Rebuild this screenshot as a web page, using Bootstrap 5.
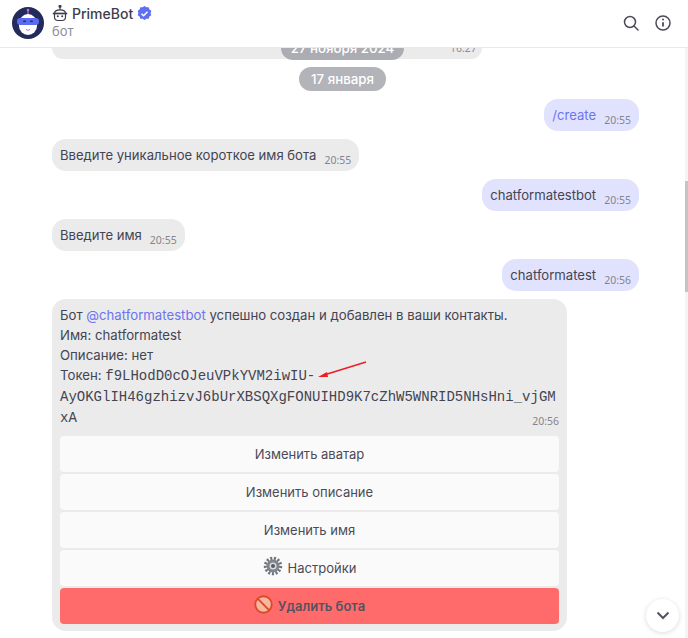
<!DOCTYPE html>
<html lang="ru">
<head>
<meta charset="utf-8">
<title>PrimeBot</title>
<link href="https://cdn.jsdelivr.net/npm/bootstrap@5.3.0/dist/css/bootstrap.min.css" rel="stylesheet">
<style>
html,body{height:100%;overflow:hidden}
body{font-family:Inter,"Noto Sans",sans-serif;font-size:13px;line-height:20px;color:#4b4b58;background:#fff}
.chat-shell{width:688px;height:638px;overflow:hidden;display:flex;flex-direction:column;position:relative}
.chat-head{height:48px;flex:none;border-bottom:1px solid #e8e8ea;padding:0 12px 2px;background:#fff}
.head-name{font-size:14px;line-height:18px;font-weight:500;color:#3d3d4c;margin-top:-1px}
.head-sub{font-size:13px;line-height:18px;color:#8d8d99;margin-top:-1px}
.head-actions{gap:15px;margin-right:4px}
.chat-body{flex:1;min-height:0;position:relative;overflow:hidden;padding:0 49px 0 52px}
.rail{position:absolute;right:0;top:0;bottom:0;width:3px;background:#f4f4f5}
.thumb{position:absolute;right:0;top:133px;height:111px;width:3px;background:#c4c4c4}
.clip-row{height:11px;margin-bottom:8px;position:relative}
.clip-bubble{width:430px;height:11px;background:#ebebeb;border-radius:0 0 14px 14px}
.date-chip{background:#b3b3ba;color:#fff;font-size:13.3px;line-height:24px;height:24px;border-radius:12px;padding:0 12px;font-weight:500}
.date-over{position:absolute;left:229px;top:-12px;width:123px;background:#acacb3;text-align:center;white-space:nowrap;padding:0}
.clip-time{position:absolute;left:398px;top:-7px;font-family:"Noto Sans",sans-serif;font-size:10.5px;line-height:14px;color:#8d8d99}
.date-row{margin-right:6px}
.msg{border-radius:14px;padding:6px 8px;font-size:13.1px;line-height:20px;display:flex;align-items:flex-end}
.msg-in{background:#ebebeb;color:#444452}
.msg-out{background:#e1e3fe;color:#444452}
.tm{font-family:"Noto Sans",sans-serif;font-size:10.5px;line-height:14px;color:#85858f;margin-left:8px;position:relative;top:2px}
.cmd,.lnk{color:#6b75f0}
.big{width:515px;background:#ebebeb;border-radius:14px;padding:6px 8px 0;margin-top:8px}
.big-text{color:#444452;line-height:20px;font-size:13.2px}
.mono{font-family:"Liberation Mono",monospace;font-size:14px;line-height:20px;overflow-wrap:anywhere}
.big-tm{float:right;font-family:"Noto Sans",sans-serif;font-size:10.5px;line-height:14px;color:#85858f;margin-top:-14px;height:14px}
.big-end{height:8px;clear:both}
.kb{display:flex;flex-direction:column;gap:2px;padding-bottom:7px;margin:0}
.kb-btn{height:36px;background:#fafafa;color:#4b4b58;border:0;border-radius:4px;font-size:13px;padding:0;width:100%;line-height:36px}
.kb-btn:hover{background:#fafafa;color:#4b4b58}
.kb-danger{background:#ff6b6b;color:#55525f;font-weight:600}
.kb-danger:hover{background:#ff6b6b;color:#55525f}
.down{position:absolute;right:9px;bottom:6px;width:33px;height:33px;border-radius:50%;background:#fff;box-shadow:0 1px 5px rgba(0,0,0,.15)}
.gap-row{margin-bottom:8px}
.arrow{position:absolute;left:266px;top:62px}
.big-wrap{position:relative}
.icon-gap{margin-right:5px}
</style>
</head>
<body>
<div class="chat-shell">
  <header class="chat-head d-flex align-items-center">
    <svg width="32" height="32" viewBox="0 0 32 32" class="me-2 flex-shrink-0">
      <circle cx="16" cy="16" r="16" fill="#232a5c"/>
      <rect x="15.4" y="2" width="1.2" height="6" fill="#c86fd0"/>
      <circle cx="16" cy="3" r="1.3" fill="#c86fd0"/>
      <path d="M7 17a9 10 0 0 1 18 0v2a9 9 0 0 1-18 0z" fill="#fff"/>
      <rect x="5" y="11" width="22" height="7" rx="3.2" fill="#5c6cf0"/>
      <rect x="11" y="13.5" width="3" height="1.6" rx=".8" fill="#232a5c"/>
      <rect x="18" y="13.5" width="3" height="1.6" rx=".8" fill="#232a5c"/>
      <path d="M14 22.5q2 1.6 4 0" stroke="#c86fd0" fill="none" stroke-width="1"/>
    </svg>
    <div class="flex-grow-1">
      <div class="head-name d-flex align-items-center">
        <svg width="16" height="17" viewBox="0 0 16 17" class="me-1" fill="none" stroke="#3d3d4c" stroke-width="1.2">
          <circle cx="8" cy="1.3" r="1" fill="#3d3d4c"/>
          <path d="M8 2.300v2.500"/>
          <path d="M2.500 8.500C2.500 6 5 4.800 8 4.800s5.500 1.200 5.500 3.700v3.500c0 2.200-1.500 3.500-3.500 3.500H6c-2 0-3.500-1.300-3.500-3.500z"/>
          <path d="M.8 8.500h14.400" stroke-width="1.700"/>
          <circle cx="5.800" cy="11.200" r="1" fill="#3d3d4c" stroke="none"/>
          <circle cx="10.200" cy="11.200" r="1" fill="#3d3d4c" stroke="none"/>
        </svg>
        <span>PrimeBot</span>
        <svg width="15" height="15" viewBox="0 0 15 15" class="ms-1">
          <path d="M7.500 0l1.900 1.300 2.300-.1.700 2.200 1.900 1.300-.7 2.300.7 2.300-1.900 1.300-.7 2.200-2.300-.1-1.900 1.300-1.900-1.300-2.300.1-.7-2.200-1.900-1.300.7-2.300-.7-2.300 1.900-1.300.7-2.200 2.300.1z" fill="#5f6ff2"/>
          <path d="M4.500 7.700l2.100 2 3.900-4" stroke="#fff" stroke-width="1.500" fill="none"/>
        </svg>
      </div>
      <div class="head-sub">бот</div>
    </div>
    <div class="d-flex align-items-center head-actions">
      <svg width="16" height="16" viewBox="0 0 16 16" fill="none" stroke="#4b4b58" stroke-width="1.500"><circle cx="7" cy="7" r="5.500"/><path d="M11 11L15 15" stroke-linecap="round"/></svg>
      <svg width="18" height="18" viewBox="0 0 18 18" fill="none" stroke="#4b4b58" stroke-width="1.500"><circle cx="9" cy="9" r="7"/><path d="M9 8.200v4.300" stroke-width="1.800"/><circle cx="9" cy="5.600" r="1" fill="#4b4b58" stroke="none"/></svg>
    </div>
  </header>
  <main class="chat-body">
    <div class="clip-row">
      <div class="clip-bubble"></div>
      <div class="date-chip date-over">27 ноября 2024</div>
      <span class="clip-time">16:27</span>
    </div>
    <div class="d-flex justify-content-center gap-row date-row"><div class="date-chip">17 января</div></div>
    <div class="d-flex justify-content-end gap-row"><div class="msg msg-out"><span class="cmd">/create</span><span class="tm">20:55</span></div></div>
    <div class="d-flex gap-row"><div class="msg msg-in"><span>Введите уникальное короткое имя бота</span><span class="tm">20:55</span></div></div>
    <div class="d-flex justify-content-end gap-row"><div class="msg msg-out"><span>chatformatestbot</span><span class="tm">20:55</span></div></div>
    <div class="d-flex gap-row"><div class="msg msg-in"><span>Введите имя</span><span class="tm">20:55</span></div></div>
    <div class="d-flex justify-content-end"><div class="msg msg-out"><span>chatformatest</span><span class="tm">20:56</span></div></div>
    <div class="big big-wrap">
      <div class="big-text">Бот <span class="lnk">@chatformatestbot</span> успешно создан и добавлен в ваши контакты.<br>Имя: chatformatest<br>Описание: нет<br>Токен: <span class="mono">f9LHodD0cOJeuVPkYVM2iwIU-AyOKGlIH46gzhizvJ6bUrXBSQXgFONUIHD9K7cZhW5WNRID5NHsHni_vjGMxA</span></div>
      <div class="big-tm">20:56</div>
      <div class="big-end"></div>
      <svg class="arrow" width="54" height="20" viewBox="0 0 54 20"><path d="M48 1L6 14" stroke="#ee1c25" stroke-width="1.500"/><path d="M0 16l9-5 1 5z" fill="#ee1c25"/></svg>
      <div class="kb">
        <button type="button" class="btn kb-btn">Изменить аватар</button>
        <button type="button" class="btn kb-btn">Изменить описание</button>
        <button type="button" class="btn kb-btn">Изменить имя</button>
        <button type="button" class="btn kb-btn"><svg width="20" height="20" viewBox="0 0 20 20" class="align-text-bottom icon-gap"><circle cx="10" cy="10" r="7.500" fill="none" stroke="#70757c" stroke-width="3.500" stroke-dasharray="2 1.600"/><circle cx="10" cy="10" r="6.500" fill="#7f858c"/><circle cx="10" cy="10" r="3.500" fill="#d9dcdf"/><circle cx="10" cy="10" r="2" fill="#555b62"/></svg>Настройки</button>
        <button type="button" class="btn kb-btn kb-danger"><svg width="19" height="19" viewBox="0 0 18 18" class="align-text-bottom icon-gap"><circle cx="9" cy="9" r="7.800" fill="#f6b8a0" stroke="#dd4a2a" stroke-width="1.800"/><path d="M3.500 3.500l11 11" stroke="#dd4a2a" stroke-width="1.800"/></svg>Удалить бота</button>
      </div>
    </div>
    <div class="rail"><div class="thumb"></div></div>
    <div class="down d-flex align-items-center justify-content-center"><svg width="14" height="9" viewBox="0 0 14 9" fill="none" stroke="#55525f" stroke-width="2"><path d="M1.500 1.500L7 7l5.500-5.500"/></svg></div>
  </main>
</div>
<script src="https://cdn.jsdelivr.net/npm/bootstrap@5.3.0/dist/js/bootstrap.bundle.min.js"></script>
</body>
</html>
